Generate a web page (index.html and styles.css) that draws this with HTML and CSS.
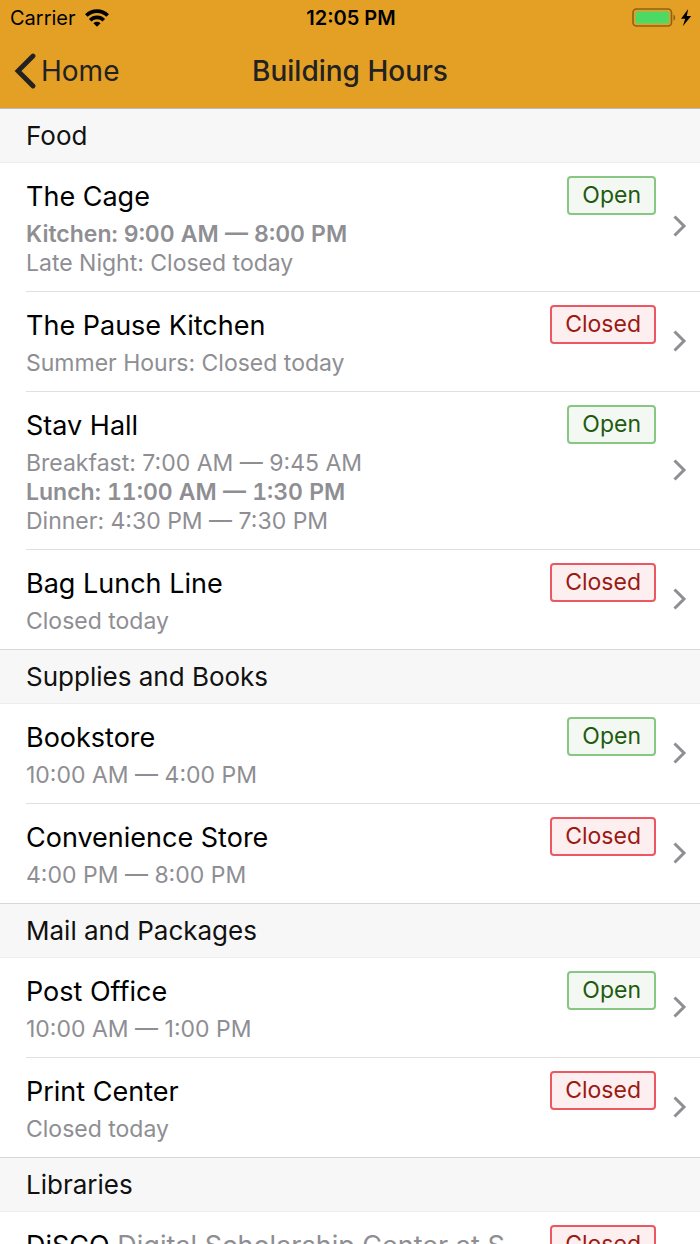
FILE: index.html
```
<!DOCTYPE html>
<html lang="en">
<head>
    <meta charset="UTF-8">
    <meta name="viewport" content="width=device-width, initial-scale=1.0">
    <title>Building Hours</title>
    <link rel="stylesheet" href="styles.css">
</head>
<body>
    <svg class="sprite" aria-hidden="true">
        <symbol id="chevron" viewBox="0 0 14 22">
            <path d="M1.500 1.500 11 11l-9.500 9.500" fill="none" stroke="currentColor" stroke-width="3"/>
        </symbol>
    </svg>

    <header class="top">
        <div class="status-bar">
            <div class="status-left">
                <span>Carrier</span>
                <svg class="wifi" viewBox="0 0 24 18" aria-label="Wi-Fi">
                    <g fill="none" stroke="#000" stroke-width="3.600">
                        <path d="M1.300 6.500a15.200 15.200 0 0 1 21.400 0"/>
                        <path d="M5.200 11.200a9.600 9.600 0 0 1 13.600 0"/>
                    </g>
                    <path d="M12 17.700 8.400 14.200a5.200 5.200 0 0 1 7.200 0z"/>
                </svg>
            </div>
            <span class="clock">12:05 PM</span>
            <div class="status-right">
                <svg class="battery" viewBox="0 0 60 20" aria-label="Battery charging">
                    <rect x="1" y="1" width="38.500" height="17" rx="3.500" fill="none" stroke="#8a6118" stroke-width="1.600"/>
                    <rect x="3.500" y="3.500" width="33.500" height="12" rx="1.500" fill="#4cd964"/>
                    <path d="M41.500 6.500c2.200 1 2.200 5.200 0 6.200z" fill="#8a6118"/>
                    <path d="M56.200 1 49 10.800h4.200L50.800 18.200l8.400-10.200h-4.400z"/>
                </svg>
            </div>
        </div>
        <nav class="nav-bar">
            <a class="back" href="#">
                <svg viewBox="0 0 22 36" aria-hidden="true">
                    <path d="M19 3 4 18l15 15" fill="none" stroke="currentColor" stroke-width="4.800" stroke-linecap="round"/>
                </svg>
                Home
            </a>
            <h1>Building Hours</h1>
        </nav>
    </header>

    <main class="list">
        <section>
            <h2>Food</h2>
            <ul>
                <li>
                    <a class="row" href="#">
                        <div class="info">
                            <h3>The Cage</h3>
                            <p class="current">Kitchen: 9:00 AM — 8:00 PM</p>
                            <p>Late Night: Closed today</p>
                        </div>
                        <span class="badge open">Open</span>
                        <svg class="chevron"><use href="#chevron"/></svg>
                    </a>
                </li>
                <li>
                    <a class="row" href="#">
                        <div class="info">
                            <h3>The Pause Kitchen</h3>
                            <p>Summer Hours: Closed today</p>
                        </div>
                        <span class="badge closed">Closed</span>
                        <svg class="chevron"><use href="#chevron"/></svg>
                    </a>
                </li>
                <li>
                    <a class="row" href="#">
                        <div class="info">
                            <h3>Stav Hall</h3>
                            <p>Breakfast: 7:00 AM — 9:45 AM</p>
                            <p class="current">Lunch: 11:00 AM — 1:30 PM</p>
                            <p>Dinner: 4:30 PM — 7:30 PM</p>
                        </div>
                        <span class="badge open">Open</span>
                        <svg class="chevron"><use href="#chevron"/></svg>
                    </a>
                </li>
                <li>
                    <a class="row" href="#">
                        <div class="info">
                            <h3>Bag Lunch Line</h3>
                            <p>Closed today</p>
                        </div>
                        <span class="badge closed">Closed</span>
                        <svg class="chevron"><use href="#chevron"/></svg>
                    </a>
                </li>
            </ul>
        </section>

        <section>
            <h2>Supplies and Books</h2>
            <ul>
                <li>
                    <a class="row" href="#">
                        <div class="info">
                            <h3>Bookstore</h3>
                            <p>10:00 AM — 4:00 PM</p>
                        </div>
                        <span class="badge open">Open</span>
                        <svg class="chevron"><use href="#chevron"/></svg>
                    </a>
                </li>
                <li>
                    <a class="row" href="#">
                        <div class="info">
                            <h3>Convenience Store</h3>
                            <p>4:00 PM — 8:00 PM</p>
                        </div>
                        <span class="badge closed">Closed</span>
                        <svg class="chevron"><use href="#chevron"/></svg>
                    </a>
                </li>
            </ul>
        </section>

        <section>
            <h2>Mail and Packages</h2>
            <ul>
                <li>
                    <a class="row" href="#">
                        <div class="info">
                            <h3>Post Office</h3>
                            <p>10:00 AM — 1:00 PM</p>
                        </div>
                        <span class="badge open">Open</span>
                        <svg class="chevron"><use href="#chevron"/></svg>
                    </a>
                </li>
                <li>
                    <a class="row" href="#">
                        <div class="info">
                            <h3>Print Center</h3>
                            <p>Closed today</p>
                        </div>
                        <span class="badge closed">Closed</span>
                        <svg class="chevron"><use href="#chevron"/></svg>
                    </a>
                </li>
            </ul>
        </section>

        <section>
            <h2>Libraries</h2>
            <ul>
                <li>
                    <a class="row" href="#">
                        <div class="info">
                            <h3>DiSCO <span class="subtitle">Digital Scholarship Center at St. Olaf</span></h3>
                            <p>Closed today</p>
                        </div>
                        <span class="badge closed">Closed</span>
                        <svg class="chevron"><use href="#chevron"/></svg>
                    </a>
                </li>
            </ul>
        </section>
    </main>
</body>
</html>
```
FILE: styles.css
```
* {
    box-sizing: border-box;
    margin: 0;
    padding: 0;
}

body {
    display: flex;
    flex-direction: column;
    height: 100vh;
    background: #fff;
    color: #111;
    font-family: Inter, Roboto, "Liberation Sans", sans-serif;
}

a {
    color: inherit;
    text-decoration: none;
}

ul {
    list-style: none;
}

.sprite {
    display: none;
}

/* status bar and navigation */
.top {
    flex: none;
    background: #e4a025;
    color: #222;
}

.status-bar {
    display: grid;
    grid-template-columns: 1fr auto 1fr;
    align-items: center;
    height: 36px;
    padding: 0 8px 0 10px;
    color: #000;
    font-size: 20px;
}

.status-left {
    display: flex;
    align-items: center;
    gap: 9px;
}

.status-right {
    display: flex;
    justify-content: flex-end;
}

.wifi {
    width: 24px;
    height: 18px;
}

.battery {
    width: 60px;
    height: 20px;
}

.clock {
    font-weight: 600;
}

.nav-bar {
    display: grid;
    grid-template-columns: 1fr auto 1fr;
    align-items: center;
    height: 72px;
    padding: 0 14px 2px;
}

.back {
    display: flex;
    align-items: center;
    gap: 5px;
    font-size: 28px;
}

.back svg {
    width: 22px;
    height: 36px;
}

h1 {
    font-size: 28px;
    font-weight: 500;
}

/* building list */
.list {
    flex: 1;
    overflow-y: auto;
    scrollbar-width: none;
}

h2 {
    height: 55px;
    padding-left: 26px;
    border-top: 1px solid #d8d8da;
    border-bottom: 1px solid #ededed;
    background: #f7f7f7;
    font-size: 26px;
    font-weight: 400;
    line-height: 53px;
}

section:first-child h2 {
    border-top-color: #b9b9c2;
}

li {
    margin-left: 26px;
    border-bottom: 1px solid #e0e0e2;
}

li:last-child {
    border-bottom: none;
}

.row {
    display: flex;
    align-items: flex-start;
    padding: 13px 13px 13px 0;
}

.info {
    flex: 1;
    min-width: 0;
    margin-right: 14px;
    color: #8e8e93;
    font-size: 23px;
    line-height: 29px;
}

h3 {
    margin-bottom: 3px;
    overflow: hidden;
    color: #000;
    font-size: 27px;
    font-weight: 400;
    line-height: 41px;
    text-overflow: ellipsis;
    white-space: nowrap;
}

.subtitle {
    color: #8e8e93;
}

.current {
    font-weight: 600;
    font-variant-numeric: tabular-nums;
}

.badge {
    padding: 0 13px;
    border: 2px solid;
    border-radius: 4px;
    font-size: 23px;
    line-height: 35px;
}

.open {
    border-color: #88c684;
    background: #f3f8f3;
    color: #1e5b0f;
}

.closed {
    border-color: #ec5861;
    background: #fdeef0;
    color: #9b1a12;
}

.chevron {
    align-self: center;
    width: 14px;
    height: 22px;
    margin: 0 0 2px 17px;
    color: #8e8e93;
}
```
